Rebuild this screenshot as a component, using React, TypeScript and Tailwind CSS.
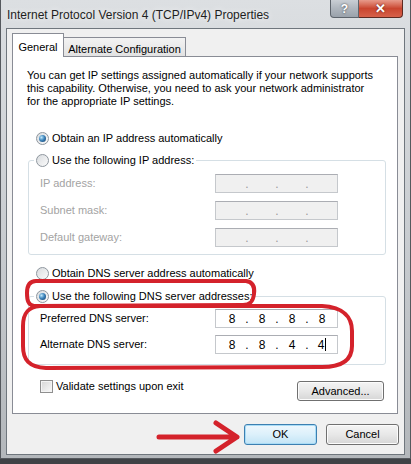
import React from "react";

const font = "font-['Liberation_Sans',Arial,sans-serif]";

function Radio({ checked }: { checked?: boolean }) {
  return (
    <span className="relative inline-flex h-[13px] w-[13px] shrink-0 items-center justify-center rounded-full border border-[#8e969e] bg-gradient-to-br from-[#d9dcdf] to-[#fbfbfb]">
      {checked && (
        <span className="h-[7px] w-[7px] rounded-full bg-[radial-gradient(circle_at_35%_35%,#bfe8fb,#3f86bd_45%,#0d3560)]" />
      )}
    </span>
  );
}

function IpBox({ values, disabled, cursor }: { values: string[]; disabled?: boolean; cursor?: boolean }) {
  return (
    <div
      className={
        "flex h-[19px] w-[123px] items-center border border-[#c5c8cc] border-t-[#abadb3] pl-[3px] text-[12px] " +
        (disabled ? "bg-[#f0f0f0] text-[#9a9a9a]" : "bg-white text-black")
      }
    >
      {values.map((v, i) => (
        <React.Fragment key={i}>
          <span className="flex w-[26px] items-center justify-center">
            {v}
            {cursor && i === 3 && <span className="ml-[1px] inline-block h-[13px] w-px bg-black" />}
          </span>
          {i < 3 && <span className="w-[4px] text-center">.</span>}
        </React.Fragment>
      ))}
    </div>
  );
}

function Row({ label, values, disabled, cursor }: { label: string; values: string[]; disabled?: boolean; cursor?: boolean }) {
  return (
    <div className="flex h-[19px] items-center">
      <span className={"w-[181px] pl-[6px] " + (disabled ? "text-[#a3a3a3]" : "text-black")}>{label}</span>
      <IpBox values={values} disabled={disabled} cursor={cursor} />
    </div>
  );
}

function Button({ children, focused }: { children: React.ReactNode; focused?: boolean }) {
  return (
    <button
      className={
        "flex h-[21px] w-[73px] items-center justify-center rounded-[3px] border text-[11px] " +
        (focused
          ? "border-[#3c7fb1] bg-gradient-to-b from-[#eef7fd] via-[#dcf0fb] to-[#c2e4f6] shadow-[inset_0_0_0_1px_#a9dcf6]"
          : "border-[#707070] bg-gradient-to-b from-[#f4f4f4] via-[#e8e8e8] to-[#d6d6d6] shadow-[inset_0_0_0_1px_#fcfcfc]")
      }
    >
      {children}
    </button>
  );
}

export default function App() {
  const empty = ["", "", "", ""];
  return (
    <div className={`relative h-[464px] w-[411px] overflow-hidden bg-[#3f4246] text-[11px] text-black ${font}`}>
      <div className="flex h-[459px] flex-col border-x border-b border-[#55595e] bg-gradient-to-b from-[#dcdfe2] via-[#c9cdd1] to-[#b3b7bb]">
        {/* title bar */}
        <div className="flex h-[28px] shrink-0 items-start">
          <span className="pl-[6px] pt-[8px] text-[12px] leading-[14px] text-[#1e1e1e] [text-shadow:0_0_6px_#fff]">
            Internet Protocol Version 4 (TCP/IPv4) Properties
          </span>
          <div className="ml-auto mr-[7px] flex">
            <div className="flex h-[18px] w-[29px] items-center justify-center rounded-bl-[4px] border border-t-0 border-[#5d646c] bg-gradient-to-b from-[#c9ced4] via-[#aeb5bd] to-[#9aa2ab] text-[12px] font-bold text-white [text-shadow:0_0_2px_#333]">
              ?
            </div>
            <div className="flex h-[18px] w-[44px] items-center justify-center rounded-br-[4px] border border-l-0 border-t-0 border-[#5e2a22] bg-gradient-to-b from-[#e79a8b] via-[#c9452f] to-[#d7614a] text-[13px] font-bold text-white [text-shadow:0_0_2px_#5a1a10]">
              ✕
            </div>
          </div>
        </div>

        {/* client area */}
        <div className="mx-[5px] flex h-[427px] flex-col border border-[#6f767d] bg-[#f0f0f0]">
          {/* tabs */}
          <div className="flex h-[27px] items-end pl-[5px]">
            <div className="relative z-10 -mb-px flex h-[24px] w-[52px] items-start justify-center border border-b-0 border-[#898c95] bg-white pt-[5px]">
              General
            </div>
            <div className="flex h-[19px] w-[122px] items-start justify-center border border-b-0 border-l-0 border-[#898c95] bg-gradient-to-b from-[#f3f3f3] to-[#e2e2e2] pt-[3px]">
              Alternate Configuration
            </div>
          </div>

          {/* panel */}
          <div className="ml-[5px] mr-[6px] h-[358px] border border-[#898c95] bg-white">
            <p className="pl-[14px] pt-[12px] leading-[13px]">
              You can get IP settings assigned automatically if your network supports
              <br />
              this capability. Otherwise, you need to ask your network administrator
              <br />
              for the appropriate IP settings.
            </p>

            <div className="mt-[23px] flex h-[15px] items-center gap-[3px] pl-[23px]">
              <Radio checked />
              <span>Obtain an IP address automatically</span>
            </div>

            <fieldset className="ml-[15px] mr-[11px] mt-[7px] rounded-[3px] border border-[#d5dfe5] px-[5px] pb-[7px]">
              <legend className="flex h-[15px] items-center gap-[3px] px-[2px]">
                <Radio />
                <span>Use the following IP address:</span>
              </legend>
              <div className="mt-[6px] flex flex-col gap-[8px]">
                <Row label="IP address:" values={empty} disabled />
                <Row label="Subnet mask:" values={empty} disabled />
                <Row label="Default gateway:" values={empty} disabled />
              </div>
            </fieldset>

            <div className="mt-[11px] flex h-[15px] items-center gap-[3px] pl-[23px]">
              <Radio />
              <span>Obtain DNS server address automatically</span>
            </div>

            <fieldset className="ml-[15px] mr-[11px] mt-[8px] rounded-[3px] border border-[#d5dfe5] px-[5px] pb-[10px]">
              <legend className="flex h-[15px] items-center gap-[3px] px-[2px]">
                <Radio checked />
                <span>Use the following DNS server addresses:</span>
              </legend>
              <div className="mt-[5px] flex flex-col gap-[7px]">
                <Row label="Preferred DNS server:" values={["8", "8", "8", "8"]} />
                <Row label="Alternate DNS server:" values={["8", "8", "4", "4"]} cursor />
              </div>
            </fieldset>

            <div className="mt-[14px] flex items-start justify-between pl-[27px] pr-[13px]">
              <label className="flex h-[14px] items-center gap-[3px]">
                <span className="h-[13px] w-[13px] border border-[#8f8f8f] bg-gradient-to-br from-[#d6d6d6] to-[#fafafa] shadow-[inset_0_0_0_1px_#f4f4f4]" />
                <span>Validate settings upon exit</span>
              </label>
              <button className="mt-[2px] flex h-[20px] w-[87px] items-center justify-center rounded-[3px] border border-[#707070] bg-gradient-to-b from-[#f4f4f4] via-[#e8e8e8] to-[#d6d6d6] text-[11px] shadow-[inset_0_0_0_1px_#fcfcfc]">
                Advanced...
              </button>
            </div>
          </div>

          {/* bottom buttons */}
          <div className="mr-[5px] mt-[10px] flex justify-end gap-[9px]">
            <Button focused>OK</Button>
            <Button>Cancel</Button>
          </div>
        </div>
      </div>

      {/* red annotations */}
      <svg className="pointer-events-none absolute left-0 top-0" width="411" height="464" viewBox="0 0 411 464">
        <g fill="none" stroke="#d4222b" strokeWidth="4" strokeLinecap="round" strokeLinejoin="round">
          <path d="M36 281 L246 281 C253 282 255 287 254 294 C253 302 250 305 243 305 L34 306 C28 305 27 300 27 293 C27 286 29 281 36 281 Z" />
          <path d="M40 306 L322 306 C344 307 352 318 352 331 L352 346 C352 361 341 367 322 367 L46 368 C29 367 23 360 23 346 L23 326 C23 313 28 307 40 306 Z" />
          <path d="M159 437 L235 437 M216 423 L237 437 L216 451" strokeWidth="5" />
        </g>
      </svg>
    </div>
  );
}
